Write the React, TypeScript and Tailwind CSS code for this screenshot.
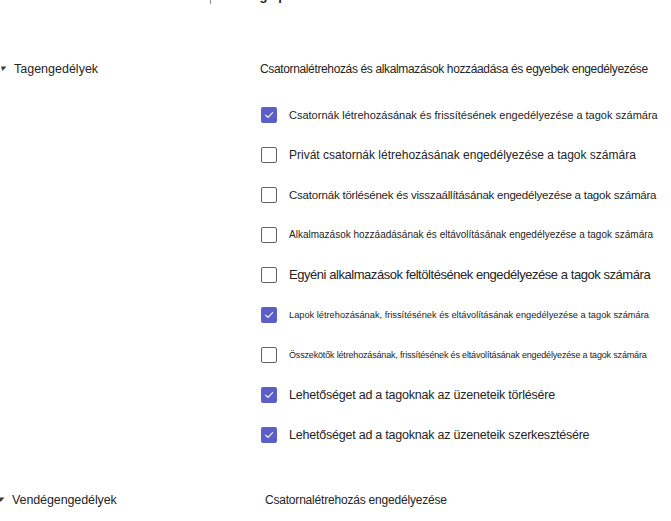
import React from "react";

type Perm = { label: string; checked: boolean; size: string };

const memberPerms: Perm[] = [
  { label: "Csatornák létrehozásának és frissítésének engedélyezése a tagok számára", checked: true, size: "text-[11px]" },
  { label: "Privát csatornák létrehozásának engedélyezése a tagok számára", checked: false, size: "text-[12px]" },
  { label: "Csatornák törlésének és visszaállításának engedélyezése a tagok számára", checked: false, size: "text-[11.5px] tracking-[-0.22px]" },
  { label: "Alkalmazások hozzáadásának és eltávolításának engedélyezése a tagok számára", checked: false, size: "text-[10px]" },
  { label: "Egyéni alkalmazások feltöltésének engedélyezése a tagok számára", checked: false, size: "text-[13px] tracking-[-0.45px]" },
  { label: "Lapok létrehozásának, frissítésének és eltávolításának engedélyezése a tagok számára", checked: true, size: "text-[9.25px]" },
  { label: "Összekötők létrehozásának, frissítésének és eltávolításának engedélyezése a tagok számára", checked: false, size: "text-[9px] tracking-[-0.17px]" },
  { label: "Lehetőséget ad a tagoknak az üzeneteik törlésére", checked: true, size: "text-[12.5px] tracking-[-0.22px]" },
  { label: "Lehetőséget ad a tagoknak az üzeneteik szerkesztésére", checked: true, size: "text-[12.5px] tracking-[-0.22px]" },
];

function Checkbox({ checked }: { checked: boolean }) {
  if (checked) {
    return (
      <span className="flex h-4 w-4 shrink-0 items-center justify-center rounded-[2px] bg-[#5b5fc7]">
        <svg width="10" height="8" viewBox="0 0 10 8" fill="none">
          <path d="M1.5 4.2 L3.9 6.4 L8.6 1.6" stroke="#ffffff" strokeWidth="1.1" strokeLinecap="round" strokeLinejoin="round" />
        </svg>
      </span>
    );
  }
  return <span className="h-4 w-4 shrink-0 rounded-[2px] border border-[#616161] bg-white" />;
}

// small expanded-section marker
function Caret() {
  return (
    <svg width="6" height="6" viewBox="0 0 6 6" className="shrink-0">
      <polygon points="0,0.5 5.5,0.5 1.5,5" fill="#3b3b3b" />
    </svg>
  );
}

export default function App() {
  return (
    <div className="h-[521px] w-[671px] overflow-hidden bg-white font-['Liberation_Sans',Arial,sans-serif] text-[#242424]">
      {/* profile picture action, scrolled mostly out of view */}
      <div className="-mt-[12px] flex h-[16px] items-end pl-[210px]">
        <span className="h-[12px] w-px bg-[#8a8a8a]" />
        <span className="pl-4 text-[13px] leading-[16px] font-semibold">Change picture</span>
      </div>

      <div className="mt-[57px] flex">
        <div className="flex w-[260px] shrink-0 items-center gap-[7px] self-start pl-[1px] text-[12.5px] leading-[16px]">
          <Caret />
          <span>Tagengedélyek</span>
        </div>
        <div className="flex flex-col">
          <div className="whitespace-nowrap text-[12px] leading-[16px] tracking-[-0.36px]">
            Csatornalétrehozás és alkalmazások hozzáadása és egyebek engedélyezése
          </div>
          <div className="mt-[30px] flex flex-col gap-[24px] pl-[1px]">
            {memberPerms.map((p) => (
              <label key={p.label} className="flex h-4 items-center gap-[12px]">
                <Checkbox checked={p.checked} />
                <span className={`${p.size} whitespace-nowrap leading-[16px]`}>{p.label}</span>
              </label>
            ))}
          </div>
        </div>
      </div>

      <div className="mt-[49px] flex">
        <div className="-ml-[1px] flex w-[266px] shrink-0 items-center gap-[7px] self-start text-[12.5px] leading-[16px] tracking-[-0.1px]">
          <Caret />
          <span>Vendégengedélyek</span>
        </div>
        <div className="whitespace-nowrap text-[12px] leading-[16px] tracking-[-0.2px]">Csatornalétrehozás engedélyezése</div>
      </div>
    </div>
  );
}
